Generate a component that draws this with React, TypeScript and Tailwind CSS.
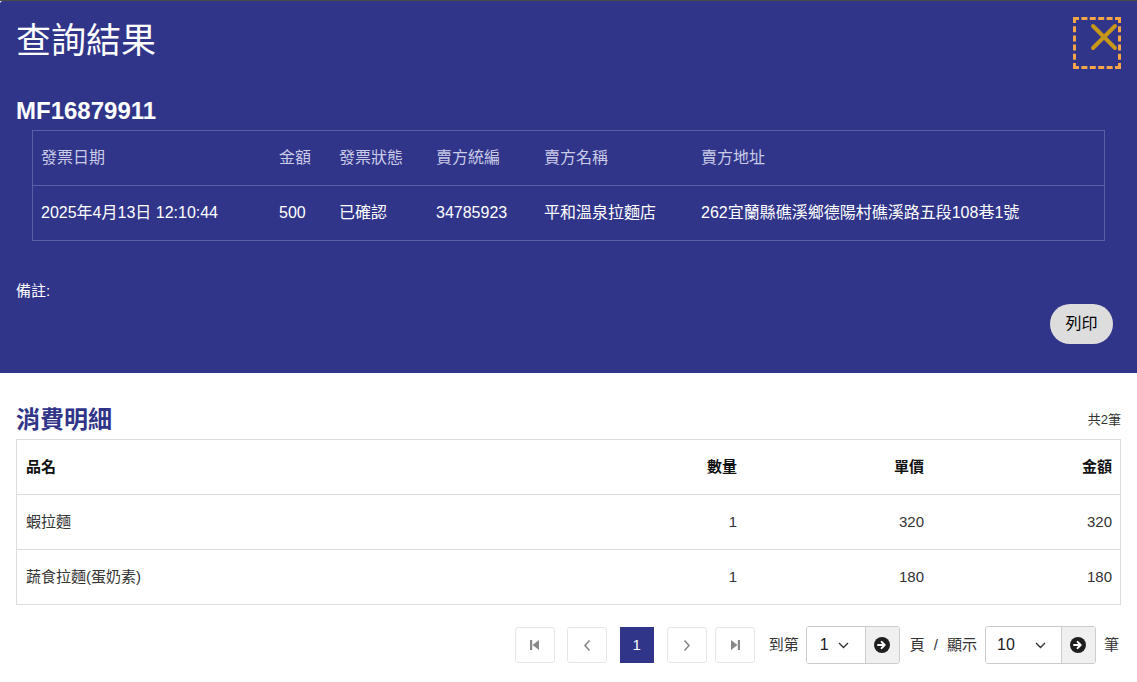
import React from "react";

const FONT = { fontFamily: '"Liberation Sans", "Noto Sans CJK TC", sans-serif' };

function GoIcon() {
  return (
    <svg width="16" height="16" viewBox="0 0 16 16">
      <circle cx="8" cy="8" r="8" fill="#1f1f1f" />
      <path d="M4 8h6.2M7.6 4.9 10.7 8l-3.1 3.1" stroke="#fff" strokeWidth="2" fill="none" strokeLinecap="round" strokeLinejoin="round" />
    </svg>
  );
}

function Chevron() {
  return (
    <svg width="11" height="7" viewBox="0 0 11 7">
      <path d="M1 1l4.5 4.5L10 1" stroke="#333" strokeWidth="1.4" fill="none" />
    </svg>
  );
}

export default function App() {
  const info = [
    ["發票日期", "2025年4月13日 12:10:44"],
    ["金額", "500"],
    ["發票狀態", "已確認"],
    ["賣方統編", "34785923"],
    ["賣方名稱", "平和溫泉拉麵店"],
    ["賣方地址", "262宜蘭縣礁溪鄉德陽村礁溪路五段108巷1號"],
  ];
  const items = [
    ["蝦拉麵", "1", "320", "320"],
    ["蔬食拉麵(蛋奶素)", "1", "180", "180"],
  ];
  const pgBtn = "w-[40px] h-[36px] flex items-center justify-center border border-[#e6e6e6] rounded-[3px] bg-white";
  return (
    <div className="w-[1137px] h-[682px] bg-white overflow-hidden" style={FONT}>
      <div className="h-[1px] bg-[#4a4a4a]" />
      <div className="bg-[#31358a] px-4 h-[372px] rounded-tl-[3px]">
        <div className="flex justify-between items-start pt-[16px] h-[85px]">
          <div className="mt-[3px] text-[35px] leading-[42px] text-white">查詢結果</div>
          <div className="w-[48px] h-[52px] border-[3px] border-dashed border-[#f5a546] flex justify-end items-start pt-[3px]">
            <svg width="28" height="28" viewBox="0 0 28 28">
              <path d="M3 3 25 25M25 3 3 25" stroke="#c9961c" strokeWidth="4" strokeLinecap="round" />
            </svg>
          </div>
        </div>
        <div className="mt-[11px] h-[28px] text-[24px] leading-[28px] font-bold text-white">MF16879911</div>
        <div className="mt-[5px] mx-4 border border-[#5a5fa6]">
          <div className="grid grid-cols-[238px_60px_97px_108px_157px_1fr] h-[55px] items-center border-b border-[#5a5fa6] text-[16px] text-[#c9cbe8]">
            {info.map(([h]) => (
              <div key={h} className="pl-[8px] whitespace-nowrap">{h}</div>
            ))}
          </div>
          <div className="grid grid-cols-[238px_60px_97px_108px_157px_1fr] h-[54px] items-center text-[16px] text-white">
            {info.map(([h, v]) => (
              <div key={h} className="pl-[8px] whitespace-nowrap">{v}</div>
            ))}
          </div>
        </div>
        <div className="mt-[40px] text-[15px] leading-[20px] text-white">備註:</div>
        <div className="flex justify-end mt-[3px] pr-[8px]">
          <div className="w-[63px] h-[40px] rounded-full bg-[#dddddd] text-[#000] text-[16px] flex items-center justify-center">列印</div>
        </div>
      </div>

      <div className="px-4">
        <div className="mt-[32px] flex justify-between items-center h-[30px]">
          <div className="text-[24px] leading-[30px] font-bold text-[#31358a]">消費明細</div>
          <div className="text-[13px] text-[#333]">共2筆</div>
        </div>
        <div className="mt-[4px] border border-[#dddddd]">
          <div className="grid grid-cols-[1fr_187px_187px_187px] h-[55px] items-center border-b border-[#dddddd] text-[15px] font-bold text-[#111]">
            <div className="pl-[9px]">品名</div>
            <div className="pr-[9px] text-right">數量</div>
            <div className="pr-[9px] text-right">單價</div>
            <div className="pr-[8px] text-right">金額</div>
          </div>
          {items.map((r, i) => (
            <div
              key={i}
              className={
                "grid grid-cols-[1fr_187px_187px_187px] h-[54px] items-center text-[15px] text-[#333] " +
                (i === 0 ? "border-b border-[#dddddd] h-[55px]" : "")
              }
            >
              <div className="pl-[9px]">{r[0]}</div>
              <div className="pr-[9px] text-right">{r[1]}</div>
              <div className="pr-[9px] text-right">{r[2]}</div>
              <div className="pr-[8px] text-right">{r[3]}</div>
            </div>
          ))}
        </div>

        <div className="mt-[21px] flex justify-end items-center text-[15px] text-[#333] pr-[2px]">
          <div className={pgBtn}>
            <svg width="12" height="12" viewBox="0 0 12 12">
              <rect x="1" y="1" width="2.2" height="10" fill="#888" />
              <path d="M10 1v10L3.5 6z" fill="#888" />
            </svg>
          </div>
          <div className={pgBtn + " ml-[12px]"}>
            <svg width="8" height="13" viewBox="0 0 8 13">
              <path d="M6.5 1.5 2 6.5l4.5 5" stroke="#888" strokeWidth="1.6" fill="none" />
            </svg>
          </div>
          <div className="ml-[13px] w-[34px] h-[36px] bg-[#31358a] text-white flex items-center justify-center">1</div>
          <div className={pgBtn + " ml-[13px]"}>
            <svg width="8" height="13" viewBox="0 0 8 13">
              <path d="M1.5 1.5 6 6.5l-4.5 5" stroke="#888" strokeWidth="1.6" fill="none" />
            </svg>
          </div>
          <div className={pgBtn + " ml-[8px]"}>
            <svg width="12" height="12" viewBox="0 0 12 12">
              <path d="M2 1v10L8.5 6z" fill="#888" />
              <rect x="8.8" y="1" width="2.2" height="10" fill="#888" />
            </svg>
          </div>
          <div className="ml-[14px]">到第</div>
          <div className="ml-[7px] flex h-[38px] border border-[#cccccc] rounded-[3px] overflow-hidden">
            <div className="w-[58px] bg-white flex items-center pl-[13px] gap-[9px] text-[16px] text-[#222]">
              <span>1</span>
              <Chevron />
            </div>
            <div className="w-[34px] bg-[#f0f0f0] border-l border-[#cccccc] flex items-center justify-center">
              <GoIcon />
            </div>
          </div>
          <div className="ml-[10px]">頁</div>
          <div className="ml-[9px]">/</div>
          <div className="ml-[9px]">顯示</div>
          <div className="ml-[8px] flex h-[38px] border border-[#cccccc] rounded-[3px] overflow-hidden">
            <div className="w-[75px] bg-white flex items-center justify-between pl-[11px] pr-[15px] text-[16px] text-[#222]">
              <span>10</span>
              <Chevron />
            </div>
            <div className="w-[34px] bg-[#f0f0f0] border-l border-[#cccccc] flex items-center justify-center">
              <GoIcon />
            </div>
          </div>
          <div className="ml-[8px]">筆</div>
        </div>
      </div>
    </div>
  );
}
